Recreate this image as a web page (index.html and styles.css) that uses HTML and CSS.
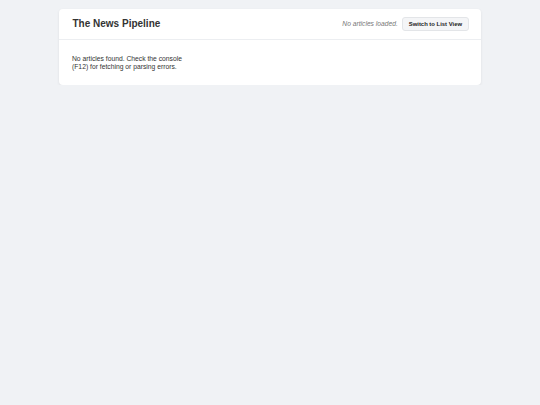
FILE: index.html
```html
<!DOCTYPE html>
<html lang="en">
<head>
<meta charset="utf-8">
<title>The News Pipeline</title>
<link rel="stylesheet" href="styles.css">
</head>
<body>
<div class="card">
  <header class="card-header">
    <h1 class="title">The News Pipeline</h1>
    <div class="controls">
      <span class="status">No articles loaded.</span>
      <button class="toggle">Switch to List View</button>
    </div>
  </header>
  <main class="card-body">
    <p class="message">No articles found. Check the console (F12) for fetching or parsing errors.</p>
  </main>
</div>
</body>
</html>
```

FILE: styles.css
```css
html, body {
  margin: 0;
  padding: 0;
}
body {
  background: #f0f2f5;
  font-family: "Liberation Sans", Arial, sans-serif;
  color: #333;
  padding-top: 8.5px;
}
.card {
  width: 422px;
  margin: 0 auto;
  background: #fff;
  border-radius: 4px;
  box-shadow: 0 1px 3px rgba(0, 0, 0, 0.08);
}
.card-header {
  display: flex;
  align-items: center;
  justify-content: space-between;
  height: 30px;
  padding: 0 12.5px 0 13.5px;
  border-bottom: 1px solid #eceef1;
}
.title {
  margin: 0;
  font-size: 10px;
  font-weight: bold;
  color: #333;
}
.controls {
  display: flex;
  align-items: center;
  gap: 4.5px;
}
.status {
  font-size: 6.7px;
  font-style: italic;
  color: #777;
}
.toggle {
  font-family: "Liberation Sans", Arial, sans-serif;
  font-size: 5.9px;
  font-weight: bold;
  color: #222;
  background: #f4f5f7;
  border: 1px solid #e3e5e8;
  border-radius: 3px;
  height: 14px;
  padding: 0 5.5px;
  margin: 0;
  cursor: pointer;
}
.card-body {
  display: block;
  padding: 15.5px 13px 13.5px;
}
.message {
  margin: 0;
  width: 118px;
  font-size: 6.75px;
  line-height: 8px;
  color: #333;
}
```
